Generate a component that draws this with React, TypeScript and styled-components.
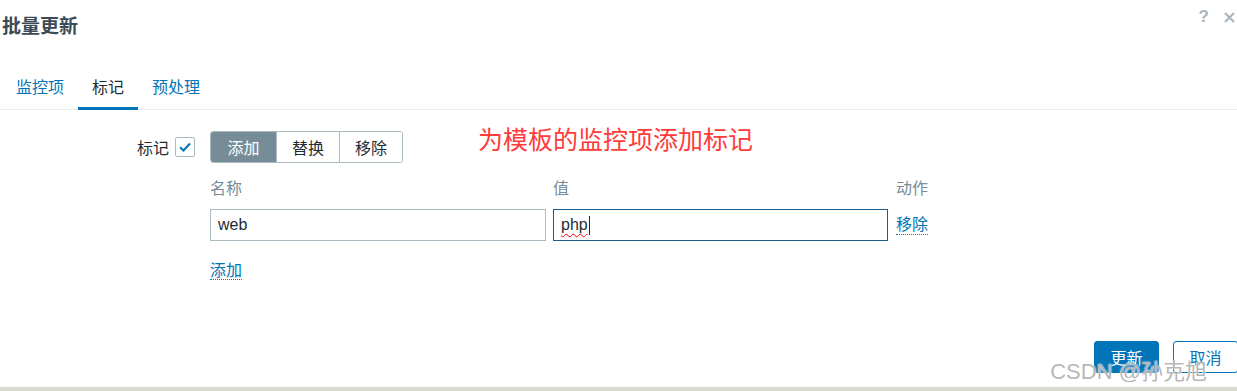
import styled, { createGlobalStyle } from 'styled-components';

const GlobalStyle = createGlobalStyle`
  html, body {
    margin: 0;
    padding: 0;
    background: #ffffff;
    overflow: hidden;
  }
  body {
    font-family: "Liberation Sans", Arial, "Noto Sans CJK SC", sans-serif;
    font-size: 16px;
    color: #1f2c33;
  }
`;

const Page = styled.div`
  position: relative;
  width: 1237px;
  height: 391px;
  display: flex;
  flex-direction: column;
  background: #ffffff;
`;

const Dialog = styled.div`
  flex: 1;
  display: flex;
  flex-direction: column;
`;

const Header = styled.div`
  height: 70px;
  display: flex;
  justify-content: space-between;
  align-items: flex-start;
  box-sizing: border-box;
  padding: 17px 0 0 2px;
`;

const Title = styled.h4`
  margin: 0;
  font-size: 19px;
  line-height: 20px;
  font-weight: bold;
  color: #3b4a54;
`;

const HeaderTools = styled.div`
  display: flex;
  align-items: center;
  gap: 15px;
  margin-top: -10px;
  padding-right: 2px;
`;

const HelpMark = styled.span`
  font-size: 17px;
  font-weight: bold;
  color: #a9b6bd;
  line-height: 20px;
`;

const TabBar = styled.nav`
  display: flex;
  padding-left: 2px;
  border-bottom: 1px solid #ebeef0;
`;

const Tab = styled.a<{ $active?: boolean }>`
  padding: 8px 14px 9px;
  line-height: 20px;
  font-size: 16px;
  color: ${(p) => (p.$active ? '#1f2c33' : '#0275b8')};
  border-bottom: 3px solid ${(p) => (p.$active ? '#0275b8' : 'transparent')};
  margin-bottom: -1px;
  cursor: pointer;
`;

const Form = styled.div`
  display: grid;
  grid-template-columns: 195px 1fr;
  column-gap: 15px;
  padding-top: 21px;
`;

const Label = styled.div`
  display: flex;
  justify-content: flex-end;
  align-items: center;
  gap: 6px;
  height: 32px;
  color: #1f2c33;
`;

const Checkbox = styled.span`
  box-sizing: border-box;
  width: 20px;
  height: 20px;
  border: 1px solid #acbbc2;
  border-radius: 2px;
  display: flex;
  align-items: center;
  justify-content: center;
`;

const Field = styled.div`
  display: flex;
  flex-direction: column;
`;

const ModeRow = styled.div`
  display: flex;
  align-items: center;
  height: 32px;
`;

const Segmented = styled.div`
  display: flex;
  border: 1px solid #acbbc2;
  border-radius: 3px;
  overflow: hidden;
  box-sizing: border-box;
  height: 32px;
`;

const Segment = styled.span<{ $active?: boolean; $w: number }>`
  box-sizing: border-box;
  width: ${(p) => p.$w}px;
  display: flex;
  align-items: center;
  justify-content: center;
  background: ${(p) => (p.$active ? '#768d99' : '#ffffff')};
  color: ${(p) => (p.$active ? '#ffffff' : '#1f2c33')};
  & + & {
    border-left: 1px solid #acbbc2;
  }
`;

const Note = styled.span`
  margin-left: 75px;
  margin-top: -18px;
  font-size: 25px;
  color: #ff3b3b;
`;

const TagTable = styled.div`
  display: grid;
  grid-template-columns: 336px 335px auto;
  column-gap: 7px;
  margin-top: 16px;
`;

const ColHead = styled.div<{ $shift?: number }>`
  line-height: 20px;
  color: #768d99;
  margin-bottom: 10px;
  margin-left: ${(p) => p.$shift ?? 0}px;
`;

const Input = styled.div<{ $focus?: boolean }>`
  box-sizing: border-box;
  height: 32px;
  border: 1px solid ${(p) => (p.$focus ? '#1b5f8f' : '#acbbc2')};
  padding: 0 7px;
  display: flex;
  align-items: center;
  color: #1f2c33;
`;

const Spell = styled.span`
  text-decoration: underline wavy #ff0000;
  text-decoration-thickness: 1px;
  text-underline-offset: 3px;
`;

const Caret = styled.span`
  display: inline-block;
  width: 1px;
  height: 19px;
  background: #1f2c33;
  margin-left: 1px;
`;

const LinkCell = styled.div`
  display: flex;
  align-items: center;
  padding-left: 1px;
`;

const Link = styled.a`
  color: #0275b8;
  line-height: 19px;
  border-bottom: 1px dotted #0275b8;
  cursor: pointer;
`;

const AddRow = styled.div`
  margin-top: 20px;
`;

const Footer = styled.div`
  margin-top: auto;
  display: flex;
  justify-content: flex-end;
  gap: 14px;
  padding-bottom: 14px;
  margin-right: -1px;
`;

const Button = styled.button<{ $primary?: boolean }>`
  box-sizing: border-box;
  width: 65px;
  height: 32px;
  border-radius: 3px;
  font: inherit;
  font-size: 16px;
  border: 1px solid #0275b8;
  background: ${(p) => (p.$primary ? '#0275b8' : '#ffffff')};
  color: ${(p) => (p.$primary ? '#ffffff' : '#0275b8')};
  padding: 0;
`;

const Overlay = styled.div`
  height: 4px;
  background: #d8dbcf;
`;

const Watermark = styled.div`
  position: absolute;
  right: 30px;
  bottom: 6px;
  font-size: 22px;
  color: rgba(120, 120, 120, 0.55);
  text-shadow: 0 0 2px #ffffff, 0 0 1px #ffffff;
  pointer-events: none;
`;

function CheckIcon() {
  return (
    <svg width="14" height="12" viewBox="0 0 14 12">
      <path d="M2 6.2 L5.5 9.5 L12 2.5" fill="none" stroke="#0275b8" strokeWidth="2" />
    </svg>
  );
}

function CloseIcon() {
  return (
    <svg width="11" height="11" viewBox="0 0 11 11">
      <path d="M1 1 L10 10 M10 1 L1 10" stroke="#a9b6bd" strokeWidth="2.2" />
    </svg>
  );
}

export default function App() {
  return (
    <Page>
      <GlobalStyle />
      <Dialog>
        <Header>
          <Title>批量更新</Title>
          <HeaderTools>
            <HelpMark>?</HelpMark>
            <CloseIcon />
          </HeaderTools>
        </Header>

        <TabBar>
          <Tab>监控项</Tab>
          <Tab $active>标记</Tab>
          <Tab>预处理</Tab>
        </TabBar>

        <Form>
          <Label>
            标记
            <Checkbox>
              <CheckIcon />
            </Checkbox>
          </Label>
          <Field>
            <ModeRow>
              <Segmented>
                <Segment $active $w={65}>添加</Segment>
                <Segment $w={63}>替换</Segment>
                <Segment $w={63}>移除</Segment>
              </Segmented>
              <Note>为模板的监控项添加标记</Note>
            </ModeRow>

            <TagTable>
              <ColHead>名称</ColHead>
              <ColHead>值</ColHead>
              <ColHead $shift={1}>动作</ColHead>
              <Input>web</Input>
              <Input $focus>
                <Spell>php</Spell>
                <Caret />
              </Input>
              <LinkCell>
                <Link>移除</Link>
              </LinkCell>
            </TagTable>

            <AddRow>
              <Link>添加</Link>
            </AddRow>
          </Field>
        </Form>

        <Footer>
          <Button $primary>更新</Button>
          <Button>取消</Button>
        </Footer>
      </Dialog>
      <Overlay />
      <Watermark>CSDN @孙克旭</Watermark>
    </Page>
  );
}
